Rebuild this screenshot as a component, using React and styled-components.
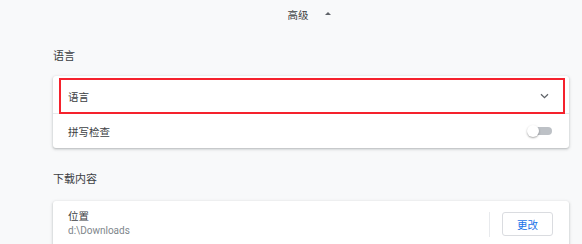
import React, { useState } from "react";
import styled, { createGlobalStyle } from "styled-components";

const GlobalStyle = createGlobalStyle`
  html, body {
    margin: 0;
    padding: 0;
    background: #f8f9fa;
  }
  body {
    font-family: Roboto, "Noto Sans CJK SC", "Liberation Sans", sans-serif;
    color: #202124;
    -webkit-font-smoothing: antialiased;
  }
`;

const Page = styled.div`
  width: 582px;
  height: 244px;
  overflow: hidden;
  box-sizing: border-box;
  padding: 0 13px 0 53px;
`;

const AdvancedBar = styled.div`
  height: 28px;
  display: flex;
  align-items: center;
  justify-content: center;
  gap: 16px;
  padding-right: 4px;
  font-size: 10.5px;
  color: #3c4043;
`;

const ArrowUp = styled.span`
  width: 0;
  height: 0;
  border-left: 3px solid transparent;
  border-right: 3px solid transparent;
  border-bottom: 3px solid #5f6368;
  margin-top: -1px;
`;

const SectionTitle = styled.h2`
  margin: ${(p) => p.$top}px 0 ${(p) => p.$bottom}px;
  height: 20px;
  line-height: 20px;
  font-size: 11px;
  font-weight: 400;
  color: #3c4043;
`;

const Card = styled.div`
  background: #fff;
  border-radius: 3px;
  box-shadow: 0 1px 2px rgba(60, 64, 67, 0.25), 0 1px 3px 1px rgba(60, 64, 67, 0.1);
`;

const SelectRow = styled.div`
  height: 38px;
  box-sizing: border-box;
  padding: 2px 4px 0 6px;
  border-bottom: 1px solid #e8eaed;
`;

const Highlight = styled.div`
  height: 36px;
  box-sizing: border-box;
  border: 2px solid #f5222d;
  display: flex;
  align-items: center;
  justify-content: space-between;
  padding: 0 14px 0 7px;
  font-size: 10.5px;
  color: #3c4043;
`;

const Row = styled.div`
  height: ${(p) => p.$height}px;
  box-sizing: border-box;
  display: flex;
  align-items: center;
  justify-content: space-between;
  padding: 0 16px 0 15px;
  font-size: 10.5px;
  color: #3c4043;
`;

const Switch = styled.button`
  position: relative;
  width: 25px;
  height: 12px;
  padding: 0;
  border: none;
  background: none;
  cursor: pointer;
  margin-right: 1px;
`;

const Track = styled.span`
  position: absolute;
  left: 2px;
  right: 0;
  top: 2px;
  height: 8px;
  border-radius: 4px;
  background: ${(p) => (p.$on ? "#8ab4f8" : "#bdc1c6")};
`;

const Knob = styled.span`
  position: absolute;
  top: 0;
  left: ${(p) => (p.$on ? "13px" : "0")};
  width: 12px;
  height: 12px;
  border-radius: 50%;
  background: ${(p) => (p.$on ? "#1a73e8" : "#fff")};
  box-shadow: 0 1px 2px rgba(0, 0, 0, 0.35);
`;

const Info = styled.div`
  display: flex;
  flex-direction: column;
  line-height: 14px;
`;

const Secondary = styled.span`
  font-size: 10px;
  color: #80868b;
`;

const Actions = styled.div`
  display: flex;
  align-items: center;
  gap: 12px;
  height: 100%;
`;

const Separator = styled.span`
  width: 1px;
  height: 25px;
  background: #e8eaed;
`;

const OutlineButton = styled.button`
  width: 51px;
  height: 24px;
  box-sizing: border-box;
  border: 1px solid #dadce0;
  border-radius: 3px;
  background: #fff;
  color: #1a73e8;
  font-family: inherit;
  font-size: 10.5px;
  cursor: pointer;
`;

function Chevron() {
  return (
    <svg width="9" height="6" viewBox="0 0 9 6">
      <path d="M1 1.2 L4.5 4.6 L8 1.2" fill="none" stroke="#5f6368" strokeWidth="1.3" />
    </svg>
  );
}

export default function App() {
  const [spell, setSpell] = useState(false);

  return (
    <>
      <GlobalStyle />
      <Page>
        <AdvancedBar>
          <span>高级</span>
          <ArrowUp />
        </AdvancedBar>

        <SectionTitle $top={19} $bottom={9}>语言</SectionTitle>
        <Card>
          <SelectRow>
            <Highlight>
              <span>语言</span>
              <Chevron />
            </Highlight>
          </SelectRow>
          <Row $height={34}>
            <span>拼写检查</span>
            <Switch onClick={() => setSpell((v) => !v)}>
              <Track $on={spell} />
              <Knob $on={spell} />
            </Switch>
          </Row>
        </Card>

        <SectionTitle $top={22} $bottom={11}>下载内容</SectionTitle>
        <Card>
          <Row $height={46}>
            <Info>
              <span>位置</span>
              <Secondary>d:\Downloads</Secondary>
            </Info>
            <Actions>
              <Separator />
              <OutlineButton>更改</OutlineButton>
            </Actions>
          </Row>
        </Card>
      </Page>
    </>
  );
}
